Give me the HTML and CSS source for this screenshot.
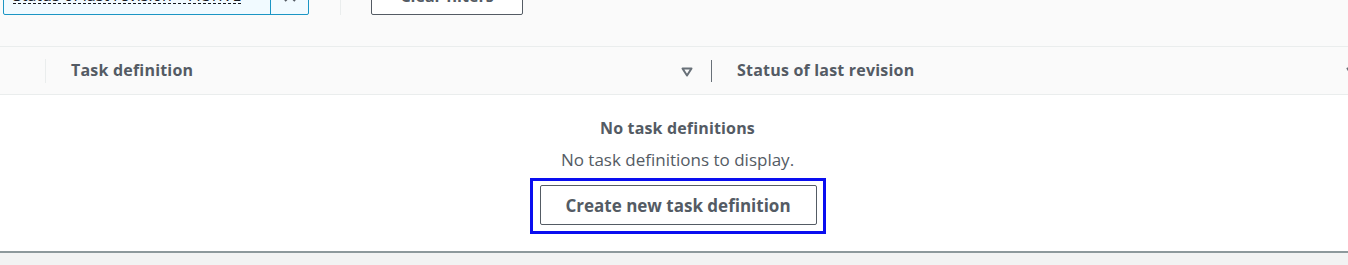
FILE: index.html
```html
<!DOCTYPE html>
<html>
<head>
<meta charset="utf-8">
<link rel="stylesheet" href="styles.css">
</head>
<body>
<div class="page">
  <div class="filters">
    <div class="search">
      <div class="token"><span class="token-text">Status of last revision = ACTIVE</span></div>
      <button class="clear-x" aria-label="Clear">
        <svg width="14" height="14" viewBox="0 0 14 14"><path d="M2 2 L12 12 M12 2 L2 12" stroke="#545b64" stroke-width="2" fill="none"/></svg>
      </button>
    </div>
    <div class="vdiv"></div>
    <button class="btn-clear">Clear filters</button>
  </div>
  <div class="table">
    <div class="thead">
      <div class="th-select"></div>
      <div class="th th-task">
        <span class="th-label">Task definition</span>
        <svg class="sort" width="12" height="10" viewBox="0 0 12 10"><path d="M1.5 1.5 H10.5 L6 8.5 Z" fill="none" stroke="#687078" stroke-width="2" stroke-linejoin="round"/></svg>
      </div>
      <div class="th th-status">
        <span class="th-label">Status of last revision</span>
        <svg class="sort" width="12" height="10" viewBox="0 0 12 10"><path d="M1.5 1.5 H10.5 L6 8.5 Z" fill="none" stroke="#687078" stroke-width="2" stroke-linejoin="round"/></svg>
      </div>
    </div>
    <div class="empty">
      <div class="empty-title">No task definitions</div>
      <div class="empty-text">No task definitions to display.</div>
      <div class="focus-ring">
        <button class="btn-create">Create new task definition</button>
      </div>
    </div>
  </div>
  <div class="footer-bg"></div>
</div>
</body>
</html>
```
FILE: styles.css
```css
* { box-sizing: border-box; }
html, body { margin: 0; padding: 0; }
body {
  background: #f2f3f3;
  font-family: "Open Sans", "Noto Sans", sans-serif;
  color: #545b64;
  width: 1348px;
  height: 265px;
  overflow: hidden;
}
.page {
  background: #fafafa;
  width: 1348px;
}
.filters {
  display: flex;
  align-items: flex-end;
  margin-top: -22px;
  padding: 0 0 31px 3px;
  border-bottom: 1px solid #eaeded;
  height: 69px;
}
.search {
  display: flex;
  width: 306px;
  height: 38px;
  border: 1px solid #1b95c4;
  border-radius: 0 0 2px 2px;
  background: #f1faff;
}
.token {
  flex: 1;
  padding: 0 9px;
  display: flex;
  align-items: flex-end;
  padding-bottom: 10px;
  border-right: 1px solid #1b95c4;
}
.token-text {
  font-size: 16px;
  line-height: 16px;
  color: #16191f;
  border-bottom: 1px dashed #16191f;
  white-space: nowrap;
  overflow: hidden;
}
.clear-x {
  width: 37px;
  border: 0;
  background: transparent;
  padding: 0;
  display: flex;
  align-items: center;
  justify-content: center;
}
.vdiv {
  width: 1px;
  height: 38px;
  background: #eaeded;
  margin-left: 31px;
}
.btn-clear {
  margin-left: 30px;
  width: 152px;
  height: 38px;
  border: 1px solid #545b64;
  border-radius: 2px;
  background: #fff;
  font-family: inherit;
  font-weight: 700;
  font-size: 16px;
  color: #545b64;
}
.table {
  width: 1356px;
}
.thead {
  display: flex;
  height: 48px;
  align-items: center;
  border-bottom: 1px solid #eaeded;
  background: #fafafa;
}
.th-select {
  width: 46px;
  height: 24px;
  border-right: 1px solid #eaeded;
}
.th {
  display: flex;
  align-items: center;
  height: 22px;
  font-weight: 700;
  font-size: 16px;
  letter-spacing: 0.2px;
}
.th-label { flex: 1; line-height: 22px; margin-top: -2px; }
.th-task {
  width: 666px;
  padding-left: 25px;
  padding-right: 20px;
  border-right: 1px solid #687078;
}
.th-status {
  width: 644px;
  padding-left: 25px;
  padding-right: 0;
}
.sort { flex: none; margin-top: 2px; margin-right: -2px; }
.empty {
  background: #fff;
  height: 158px;
  display: flex;
  flex-direction: column;
  align-items: center;
  padding-top: 22px;
  padding-right: 1px;
  border-bottom: 2px solid #8d999c;
}
.empty-title {
  font-weight: 700;
  font-size: 16px;
  letter-spacing: 0.15px;
  line-height: 22px;
}
.empty-text {
  font-size: 17px;
  line-height: 22px;
  margin-top: 10px;
}
.focus-ring {
  margin-top: 7px;
  border: 3px solid #0a0ef0;
  padding: 4px 6px 6px 7px;
}
.btn-create {
  display: block;
  width: 277px;
  height: 40px;
  border: 1px solid #545b64;
  border-radius: 2px;
  background: #fff;
  font-family: inherit;
  font-weight: 700;
  font-size: 17px;
  color: #545b64;
}
.footer-bg {
  height: 20px;
  background: #f2f3f3;
}
```
